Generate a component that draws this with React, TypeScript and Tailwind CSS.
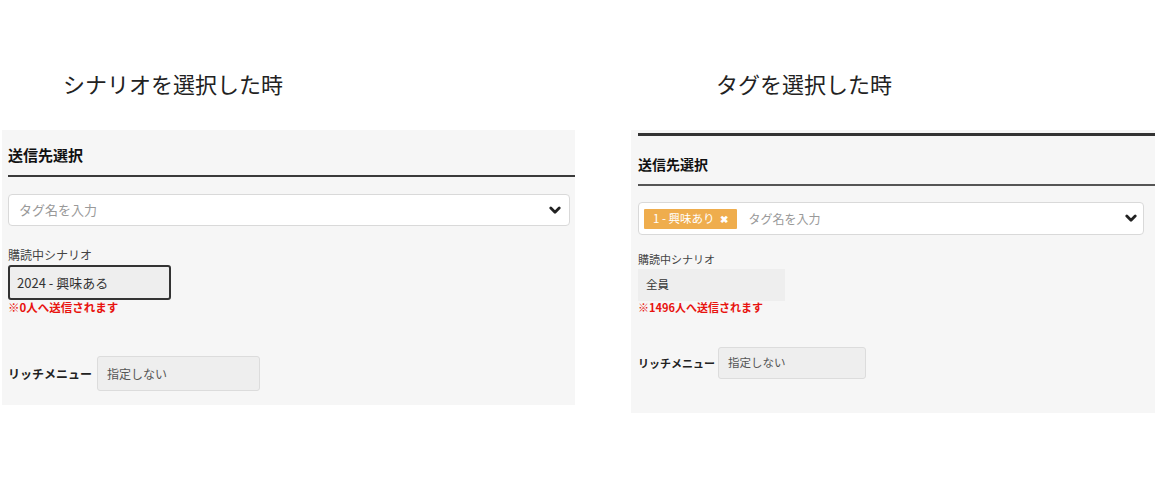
import React from "react";

const font = { fontFamily: '"Noto Sans CJK JP", "Noto Sans", sans-serif' };

function Chevron({ className }: { className?: string }) {
  return (
    <svg className={className} width="12" height="9" viewBox="0 0 12 9">
      <polyline points="1.8,2 6,6.2 10.2,2" fill="none" stroke="#222" strokeWidth="2.8" strokeLinecap="round" strokeLinejoin="round" />
    </svg>
  );
}

export default function App() {
  return (
    <div className="w-[1167px] h-[488px] bg-white flex text-[#333]" style={font}>
      {/* Left */}
      <div className="ml-[2px] w-[573px] flex flex-col">
        <div className="h-[130px] pt-[70px] pl-[61px] text-[22px] leading-[26px] text-[#222]">シナリオを選択した時</div>
        <div className="h-[275px] bg-[#f6f6f6] pl-[6px] flex flex-col">
          <div className="pt-[16px] pb-[11px] border-b-[2px] border-[#3a3a3a] text-[15px] leading-[18px] font-bold text-[#111]">送信先選択</div>
          <div className="mt-[17px] mr-[5px] h-[32px] bg-white border border-[#d9d9d9] rounded-[4px] flex items-center pl-[10px] pr-[8px]">
            <span className="flex-1 text-[13px] text-[#999]">タグ名を入力</span>
            <Chevron />
          </div>
          <div className="mt-[21px] text-[12px] leading-[16px] text-[#444]">購読中シナリオ</div>
          <div className="mt-[2px] w-[163px] h-[35px] bg-[#eeeeee] border-[2px] border-[#333] rounded-[3px] flex items-center pl-[7px] text-[13px] text-[#333]">2024 - 興味ある</div>
          <div className="mt-0 text-[11.5px] leading-[14px] font-bold text-[#e8130f]">※0人へ送信されます</div>
          <div className="mt-[42px] flex items-center">
            <span className="shrink-0 whitespace-nowrap text-[12px] font-bold text-[#222] w-[89px]">リッチメニュー</span>
            <div className="w-[163px] h-[35px] bg-[#eeeeee] border border-[#dcdcdc] rounded-[3px] flex items-center pl-[9px] text-[12px] text-[#555]">指定しない</div>
          </div>
        </div>
      </div>

      {/* Right */}
      <div className="ml-[56px] w-[524px] flex flex-col">
        <div className="h-[130px] pt-[70px] pl-[85px] text-[22px] leading-[26px] text-[#222]">タグを選択した時</div>
        <div className="h-[283px] bg-[#f6f6f6] pl-[7px] pt-[3px] flex flex-col">
          <div className="h-[3px] bg-[#333]" />
          <div className="pt-[20px] pb-[11px] border-b-[2px] border-[#555] text-[14px] leading-[17px] font-bold text-[#111]">送信先選択</div>
          <div className="mt-[16px] mr-[11px] h-[33px] bg-white border border-[#d9d9d9] rounded-[4px] flex items-center pl-[5px] pr-[6px]">
            <span className="h-[20px] bg-[#efad4d] text-white text-[11.5px] flex items-center px-[9px] rounded-[1px]">
              1 - 興味あり<span className="ml-[5px] text-[10px] font-bold">✖</span>
            </span>
            <span className="flex-1 ml-[12px] text-[12px] text-[#999]">タグ名を入力</span>
            <Chevron />
          </div>
          <div className="mt-[17px] text-[11px] leading-[15px] text-[#444]">購読中シナリオ</div>
          <div className="mt-[2px] w-[147px] h-[32px] bg-[#eeeeee] flex items-center pl-[8px] text-[11.5px] text-[#333]">全員</div>
          <div className="mt-0 text-[11px] leading-[13px] font-bold text-[#e8130f]">※1496人へ送信されます</div>
          <div className="mt-[33px] flex items-center">
            <span className="shrink-0 whitespace-nowrap text-[11px] font-bold text-[#222] w-[80px]">リッチメニュー</span>
            <div className="w-[148px] h-[32px] bg-[#eeeeee] border border-[#dcdcdc] rounded-[3px] flex items-center pl-[9px] text-[11.5px] text-[#555]">指定しない</div>
          </div>
        </div>
      </div>
    </div>
  );
}
